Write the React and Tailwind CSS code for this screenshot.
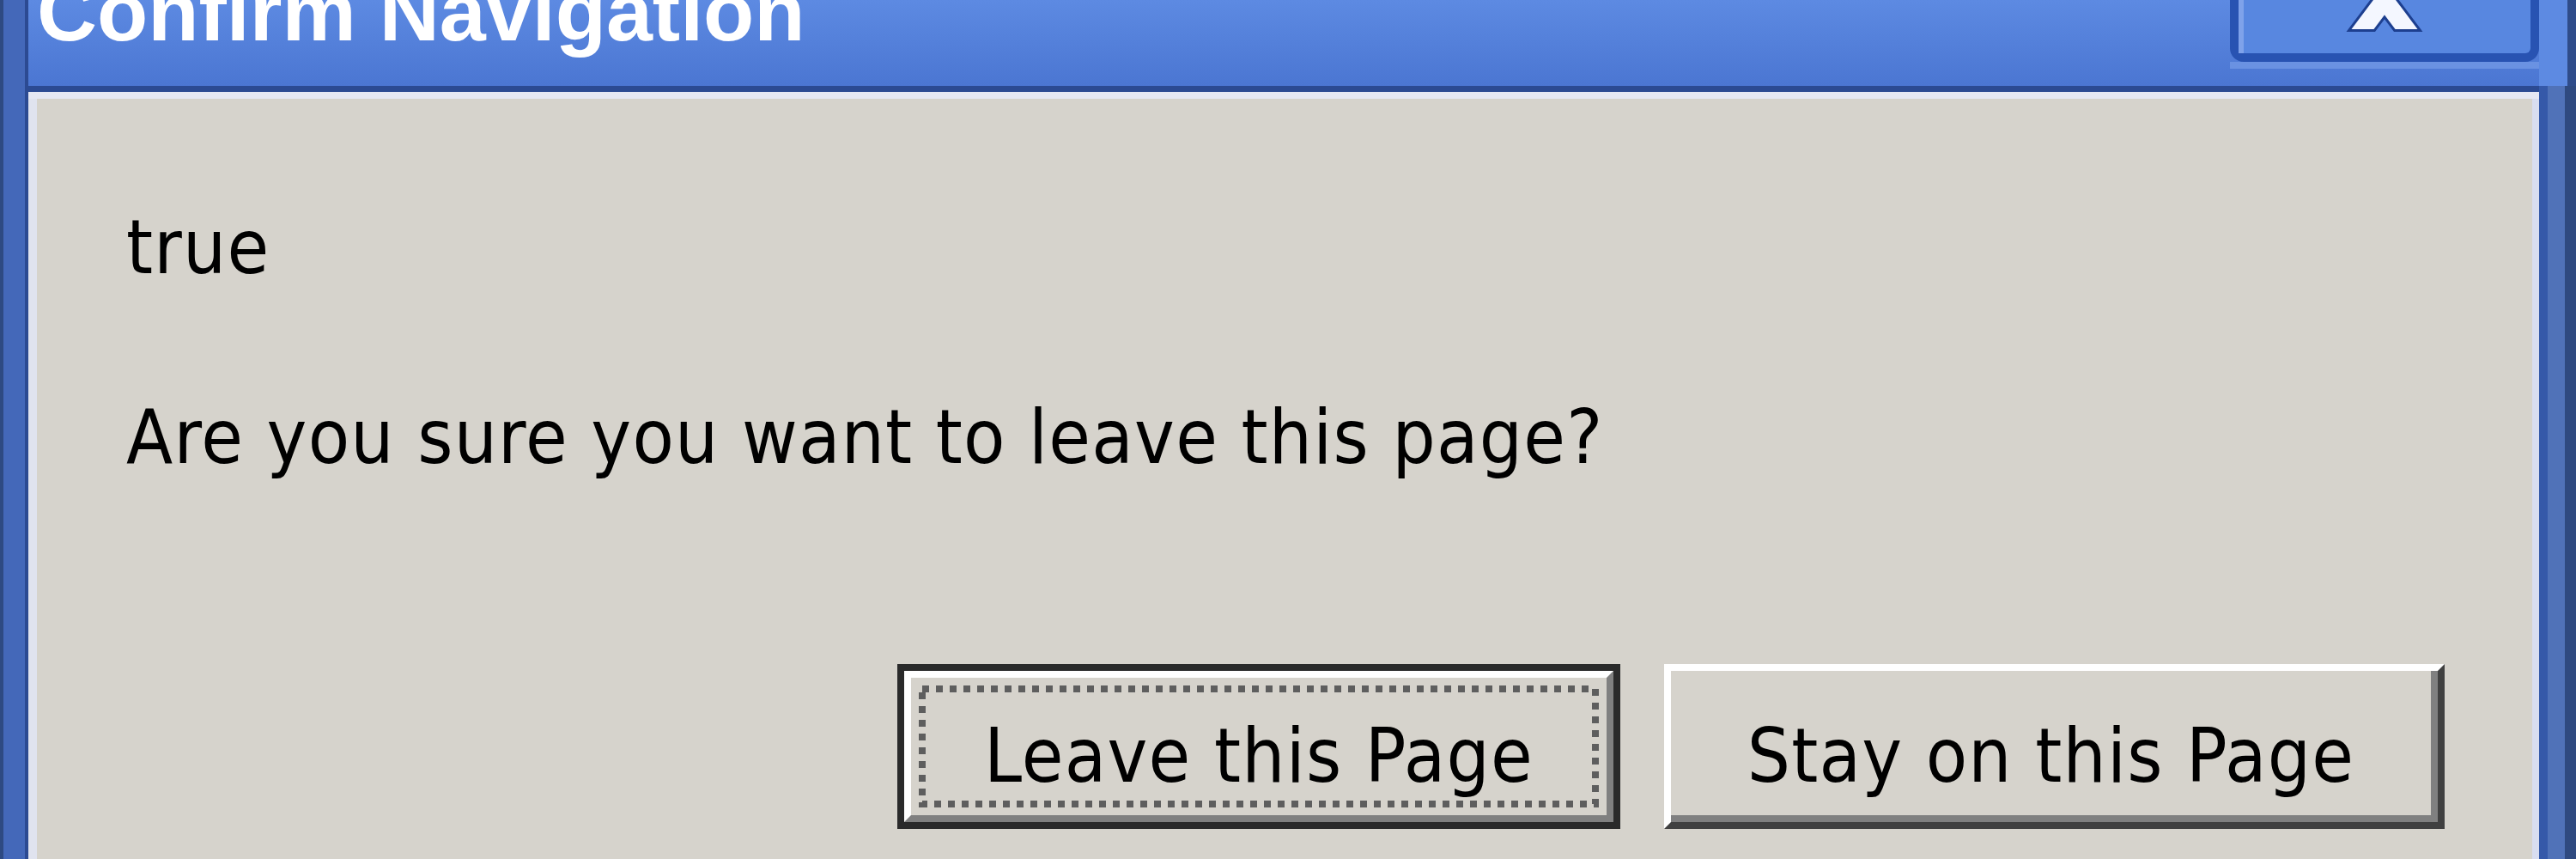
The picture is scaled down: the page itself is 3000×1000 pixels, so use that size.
import React from "react";

const bodyFont = { fontFamily: '"DejaVu Sans Condensed", "DejaVu Sans", Tahoma, sans-serif' };

const CloseGlyph = () => {
  // only the lower half of the X shows, the rest is above the window
  const leg = (dir) => {
    const w = 13;
    const y0 = -20;
    const y1 = 34;
    const k = 0.75 * dir;
    return `${-w - k * y0},${y0} ${w - k * y0},${y0} ${w - k * y1},${y1} ${-w - k * y1},${y1}`;
  };
  return (
    <svg className="absolute left-1/2 top-0 -translate-x-1/2" width="100" height="40" viewBox="-50 0 100 40">
      <polygon points={leg(1)} fill="#fff" stroke="#1d3f8f" strokeWidth="6" />
      <polygon points={leg(-1)} fill="#fff" stroke="#1d3f8f" strokeWidth="6" />
      <polygon points={leg(1)} fill="#f4f7ff" />
      <polygon points={leg(-1)} fill="#f4f7ff" />
    </svg>
  );
};

const FocusRect = () => (
  <svg className="absolute inset-[9px] h-[calc(100%-18px)] w-[calc(100%-18px)]" preserveAspectRatio="none">
    <rect x="4" y="4" width="calc(100% - 8px)" height="calc(100% - 8px)" fill="none" stroke="#5e5e5e" strokeWidth="8" strokeDasharray="8 8" />
  </svg>
);

export default function App() {
  return (
    <div className="flex h-[1000px] w-[3000px] overflow-hidden bg-[#d6d3cc]">
      {/* left frame */}
      <div className="flex w-[33px] flex-col">
        <div className="flex-1 border-l-[4px] border-r-[4px] border-l-[#2e4a82] border-r-[#2c4a92] bg-[#4468b9]" />
      </div>

      <div className="flex flex-1 flex-col">
        {/* title bar */}
        <div className="flex h-[100px] items-start justify-between bg-linear-to-b from-[#5d8ae2] to-[#4b76d2]">
          <div
            className="-mt-[35px] pl-[10px] text-[97px] font-bold leading-[97px] text-white"
            style={{ fontFamily: '"Liberation Sans", Arial, sans-serif' }}
          >
            Confirm Navigation
          </div>
          <div className="flex h-[80px] flex-col">
            <div className="relative h-[72px] w-[360px] rounded-b-[16px] border-[10px] border-t-0 border-[#2853b2] bg-[#5887e0]">
              <div className="h-full border-l-[6px] border-[#7fa2ea]" />
              <CloseGlyph />
            </div>
            <div className="h-[8px] bg-[#6a92e2]" />
          </div>
        </div>
        <div className="h-[7px] bg-[#2b4a92]" />
        <div className="h-[8px] bg-[#e6e8f3]" />

        {/* body */}
        <div
          className="flex flex-1 flex-col border-l-[10px] border-r-[8px] border-l-[#e0e3ef] border-r-[#d8ddf0] bg-[#d6d3cc] pl-[104px] pr-[102px] pt-[120px] text-[88px] leading-[106px] tracking-[1.25px] text-black"
          style={bodyFont}
        >
          <div>true</div>
          <div className="mt-[115px]">Are you sure you want to leave this page?</div>

          <div className="mt-[211px] flex justify-end gap-[51px]">
            <button className="flex h-[192px] w-[842px] border-[8px] border-[#2a2a2a] bg-[#d6d3cc]">
              <div className="relative flex flex-1 items-center justify-center border-[8px] border-b-[#808080] border-l-white border-r-[#808080] border-t-white pt-[22px]">
                <span>Leave this Page</span>
                <FocusRect />
              </div>
            </button>
            <button className="flex h-[192px] w-[909px] border-[8px] border-b-[#404040] border-l-white border-r-[#404040] border-t-white bg-[#d6d3cc]">
              <div className="flex flex-1 items-center justify-center border-b-[8px] border-r-[8px] border-[#808080] pt-[30px]">
                <span>Stay on this Page</span>
              </div>
            </button>
          </div>
        </div>
      </div>

      {/* right frame */}
      <div className="flex w-[43px] flex-col">
        <div className="h-[100px] border-r-[10px] border-[#2f4c8a] bg-[#5d8ae2]" />
        <div className="flex-1 border-l-[10px] border-r-[13px] border-l-[#3559a9] border-r-[#2f4a80] bg-[#5072b8]" />
      </div>
    </div>
  );
}
